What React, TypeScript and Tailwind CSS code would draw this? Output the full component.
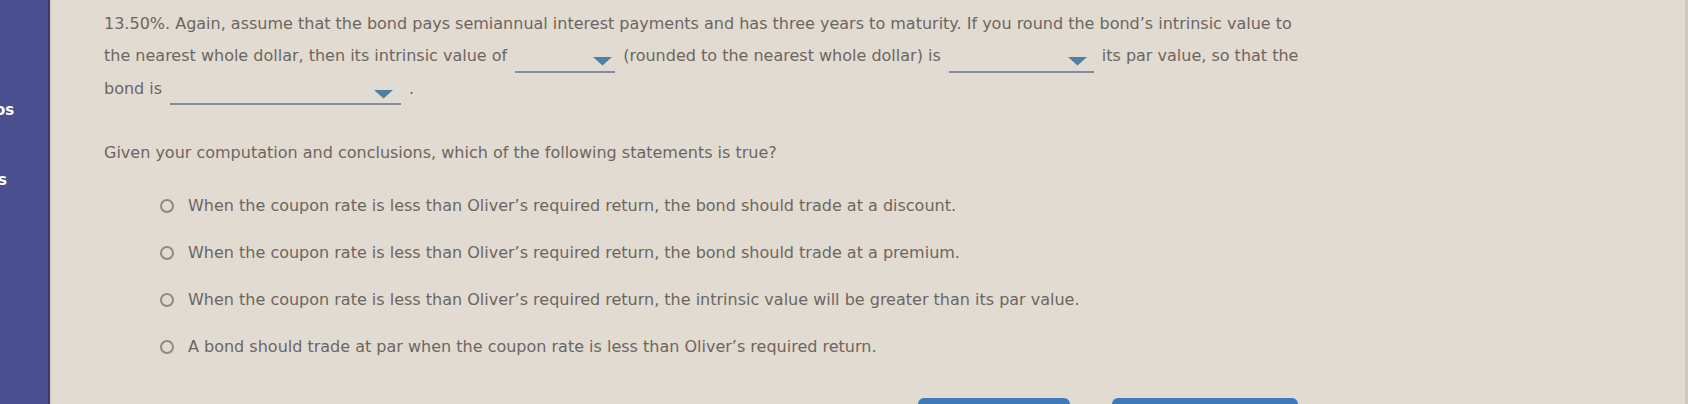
import React from "react";

function Dropdown({ width, gap }: { width: string; gap: string }) {
  return (
    <span className={`inline-flex ${width} h-[20px] items-center justify-end border-b-[2px] border-[#7f8ca1] align-[-5px] mx-[8px]`}>
      <svg width="19" height="9" viewBox="0 0 19 9" className={gap}>
        <polygon points="0,0 19,0 9.5,8.5" fill="#4b80a8" />
      </svg>
    </span>
  );
}

const options = [
  "When the coupon rate is less than Oliver’s required return, the bond should trade at a discount.",
  "When the coupon rate is less than Oliver’s required return, the bond should trade at a premium.",
  "When the coupon rate is less than Oliver’s required return, the intrinsic value will be greater than its par value.",
  "A bond should trade at par when the coupon rate is less than Oliver’s required return.",
];

export default function App() {
  return (
    <div className="flex w-[1688px] h-[404px] overflow-hidden bg-[#e2dbd1] font-['DejaVu_Sans',sans-serif] text-[#6c6661]">
      {/* sidebar */}
      <div className="flex w-[50px] shrink-0 flex-col overflow-hidden bg-[#4a4f8f] border-r-[2px] border-[#3a3d6e] text-white font-bold text-[15px]">
        <span className="mt-[100px] -ml-[5px] leading-[20px]">os</span>
        <span className="mt-[50px] -ml-[2px] leading-[20px]">s</span>
      </div>
      <div className="w-[2px] shrink-0 bg-[#e9c9c0]" />

      {/* main */}
      <div className="flex-1 pl-[52px] pt-[8px] border-r-[3px] border-[#cfc8bf] text-[16px]">
        <div className="w-[1200px] leading-[32px]">
          13.50%. Again, assume that the bond pays semiannual interest payments and has three years to maturity. If you round the bond’s intrinsic value to the nearest whole dollar, then its intrinsic value of
          <Dropdown width="w-[100px]" gap="mr-[3px]" />
          (rounded to the nearest whole dollar) is
          <Dropdown width="w-[145px]" gap="mr-[7px]" />
          its par value, so that the
          <br />
          bond is
          <Dropdown width="w-[231px]" gap="mr-[8px]" />
          .
        </div>

        <p className="mt-[37px] leading-[22px]">Given your computation and conclusions, which of the following statements is true?</p>

        <div className="mt-[31px] ml-[56px] flex flex-col gap-[25px]">
          {options.map((o) => (
            <label key={o} className="flex items-center gap-[14px] leading-[22px]">
              <span className="w-[14px] h-[14px] shrink-0 rounded-full border-[2px] border-[#8f8a86]" />
              <span>{o}</span>
            </label>
          ))}
        </div>

        <div className="mt-[40px] ml-[814px] flex gap-[42px]">
          <div className="w-[152px] h-[20px] rounded-t-[6px] bg-[#3f79b9]" />
          <div className="w-[186px] h-[20px] rounded-t-[6px] bg-[#3f79b9]" />
        </div>
      </div>
    </div>
  );
}
